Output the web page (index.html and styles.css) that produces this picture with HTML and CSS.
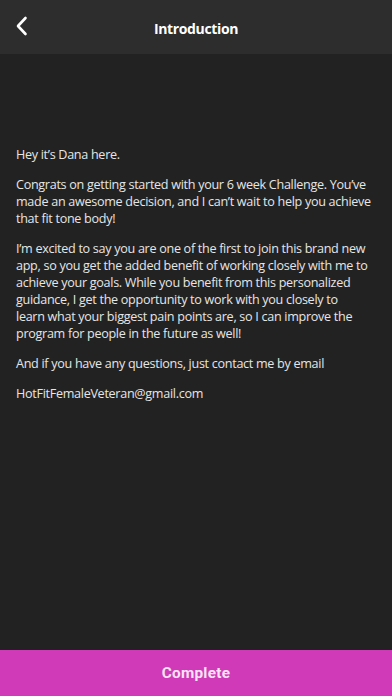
FILE: index.html
```html
<!DOCTYPE html>
<html>
<head>
<meta charset="utf-8">
<link rel="stylesheet" href="styles.css">
</head>
<body>
<div class="screen">
  <header class="topbar">
    <div class="back">
      <svg width="14" height="20" viewBox="0 0 14 20"><path d="M10.5 2 L3 10 L10.5 18" fill="none" stroke="#ffffff" stroke-width="2.6" stroke-linecap="round" stroke-linejoin="round"/></svg>
    </div>
    <div class="title">Introduction</div>
  </header>
  <main class="content">
    <p>Hey it’s Dana here.</p>
    <p>Congrats on getting started with your 6 week Challenge. You’ve made an awesome decision, and I can’t wait to help you achieve that fit tone body!</p>
    <p>I’m excited to say you are one of the first to join this brand new app, so you get the added benefit of working closely with me to achieve your goals. While you benefit from this personalized guidance, I get the opportunity to work with you closely to<br>learn what your biggest pain points are, so I can improve the program for people in the future as well!</p>
    <p>And if you have any questions, just contact me by email</p>
    <p>HotFitFemaleVeteran@gmail.com</p>
  </main>
  <div class="complete">Complete</div>
</div>
</body>
</html>
```
FILE: styles.css
```css
* { box-sizing: border-box; }
html, body { margin: 0; padding: 0; background: #222222; }
.screen {
  width: 392px;
  height: 696px;
  display: flex;
  flex-direction: column;
  background: #222222;
}
.topbar {
  height: 54px;
  flex: 0 0 54px;
  background: #2d2d2d;
  position: relative;
  display: flex;
  align-items: center;
  justify-content: center;
}
.back {
  position: absolute;
  left: 15px;
  top: 16px;
  width: 14px;
  height: 20px;
}
.back svg { display: block; }
.title {
  color: #ffffff;
  font-family: "Open Sans", sans-serif;
  font-weight: 700;
  font-size: 14px;
  letter-spacing: -0.35px;
  margin-top: 2px;
}
.content {
  flex: 1;
  padding: 92px 14px 0 16px;
  color: #e6e6e6;
  font-family: "Open Sans", sans-serif;
  font-size: 12.6px;
  letter-spacing: -0.3px;
  line-height: 17px;
}
.content p {
  margin: 0 0 13px 0;
}
.complete {
  flex: 0 0 46px;
  height: 46px;
  background: #d03ab8;
  color: #f7e4f3;
  font-family: Roboto, "Liberation Sans", sans-serif;
  font-weight: 700;
  font-size: 15.3px;
  letter-spacing: 0.3px;
  display: flex;
  align-items: center;
  justify-content: center;
}
```
